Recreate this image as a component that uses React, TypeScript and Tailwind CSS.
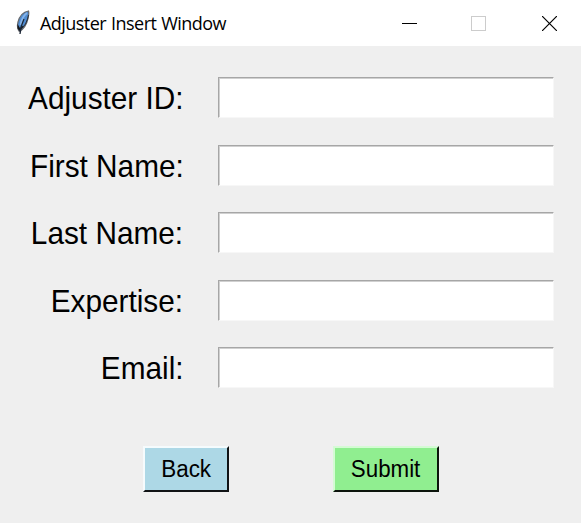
const fields = ["Adjuster ID:", "First Name:", "Last Name:", "Expertise:", "Email:"];

function Feather() {
  return (
    <svg width="16" height="26" viewBox="0 0 16 26" className="shrink-0">
      <path d="M13.500 1C8 2 4.500 6 3 12C2 16 2.300 19 4.300 21.500C8.500 19 11.800 14 13 8.500C13.600 5.500 14.300 3 13.500 1Z" fill="#4f8bd0" stroke="#66686c" strokeWidth="1.200" />
      <path d="M12 3C9 5 6.500 10 5.500 15" fill="none" stroke="#85b3e8" strokeWidth="2" />
      <path d="M2.500 14L2.500 18.500L4.500 21L8.500 17L7 15.500L5 18Z" fill="#15181d" />
      <path d="M9 9C7 13 5.500 17 5 24" fill="none" stroke="#1c2736" strokeWidth="1.300" />
      <path d="M13.500 5L12.500 9L10.500 14L8 17" fill="none" stroke="#28303b" strokeWidth="1" />
    </svg>
  );
}

function TitleBar() {
  return (
    <header className="flex h-[46px] items-center bg-white pl-[15px]">
      <Feather />
      <h1 className="ml-[9px] w-[200px] whitespace-nowrap font-['Open_Sans',sans-serif] text-[18px] leading-[26px] tracking-[-0.54px] [word-spacing:0.8px]">
        Adjuster Insert Window
      </h1>
      <div className="ml-auto flex items-center pr-6">
        <svg width="15" height="15" shapeRendering="crispEdges">
          <path d="M0 7.500H15" stroke="#000" />
        </svg>
        <svg width="15" height="15" className="ml-[54px]" shapeRendering="crispEdges">
          <rect x=".5" y=".5" width="14" height="14" fill="none" stroke="#ccc" />
        </svg>
        <svg width="15" height="15" className="ml-14">
          <path d="M0 0L15 15M15 0L0 15" stroke="#000" strokeWidth="1.200" />
        </svg>
      </div>
    </header>
  );
}

export default function App() {
  return (
    <div className="h-[523px] w-[581px] overflow-hidden bg-[#efefef] font-['Liberation_Sans',Arial,sans-serif] text-black">
      <TitleBar />
      <main className="pt-[31px]">
        <div className="flex flex-col gap-[26.5px]">
          {fields.map((label) => (
            <label key={label} className="flex h-[41px] items-center">
              <span className="flex w-[183.5px] justify-end pt-0.5">
                <span className="origin-right scale-x-[0.945] whitespace-nowrap text-[31.5px] leading-[43px]">{label}</span>
              </span>
              <input
                aria-label={label}
                className="ml-[34.5px] h-[41px] w-[336px] border border-t-[#a6a6a6] border-r-[#f7f7f7] border-b-[#f7f7f7] border-l-[#a6a6a6] bg-white shadow-[inset_1px_1px_0_#d0d0d0] outline-none"
              />
            </label>
          ))}
        </div>
        <div className="mt-[58px] flex gap-[104px] pl-[143px]">
          <button className="flex h-[46px] w-[86px] items-center justify-center border-2 border-t-[#f5fbfd] border-r-[#101315] border-b-[#101315] border-l-[#f5fbfd] bg-[#add8e6] pt-0.5 text-[23.5px] leading-none">
            <span className="scale-x-[0.955]">Back</span>
          </button>
          <button className="flex h-[46px] w-[106px] items-center justify-center border-2 border-t-[#d5fbd5] border-r-[#0c140c] border-b-[#0c140c] border-l-[#d5fbd5] bg-[#90ee90] pt-0.5 text-[23.5px] leading-none">
            <span className="scale-x-[0.95]">Submit</span>
          </button>
        </div>
      </main>
    </div>
  );
}
